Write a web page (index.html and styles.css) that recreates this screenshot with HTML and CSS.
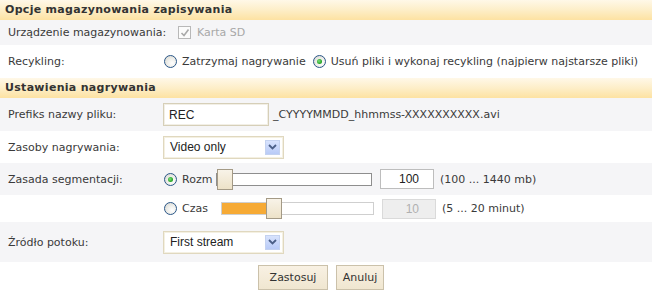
FILE: index.html
```html
<!DOCTYPE html>
<html lang="pl">
<head>
<meta charset="utf-8">
<title>Opcje nagrywania</title>
<link rel="stylesheet" href="styles.css">
</head>
<body>
<div class="page">
  <div class="head">Opcje magazynowania zapisywania</div>
  <div class="row gray h25">
    <div class="label">Urządzenie magazynowania:</div>
    <div class="ctl">
      <span class="check"><svg width="10" height="10" viewBox="0 0 10 10"><path d="M1.5 5 L4 7.5 L8.5 1.5" fill="none" stroke="#a9a9a9" stroke-width="1.6"/></svg></span>
      <span class="muted">Karta SD</span>
    </div>
  </div>
  <div class="row h33">
    <div class="label">Recykling:</div>
    <div class="ctl">
      <span class="radio"></span><span class="opt">Zatrzymaj nagrywanie</span>
      <span class="radio on"></span><span class="opt">Usuń pliki i wykonaj recykling (najpierw najstarsze pliki)</span>
    </div>
  </div>
  <div class="head">Ustawienia nagrywania</div>
  <div class="row gray h33">
    <div class="label">Prefiks nazwy pliku:</div>
    <div class="ctl">
      <span class="text prefix">REC</span>
      <span class="suffix">_CYYYYMMDD_hhmmss-XXXXXXXXXX.avi</span>
    </div>
  </div>
  <div class="row h32">
    <div class="label">Zasoby nagrywania:</div>
    <div class="ctl">
      <span class="select">Video only<span class="arrow"><svg width="9" height="6" viewBox="0 0 9 6"><path d="M1 1 L4.5 4.5 L8 1" fill="none" stroke="#4b5f87" stroke-width="1.8"/></svg></span></span>
    </div>
  </div>
  <div class="row gray h32">
    <div class="label">Zasada segmentacji:</div>
    <div class="ctl">
      <span class="seg-opt"><span class="radio on"></span><span class="opt small">Rozm</span></span>
      <span class="slider wide"><span class="thumb" style="left:0px"></span></span>
      <span class="num">100</span>
      <span class="range">(100 ... 1440 mb)</span>
    </div>
  </div>
  <div class="row h27">
    <div class="label"></div>
    <div class="ctl">
      <span class="seg-opt"><span class="radio"></span><span class="opt small">Czas</span></span>
      <span class="slider off"><span class="fill" style="width:45px"></span><span class="thumb" style="left:44px"></span></span>
      <span class="num dis">10</span>
      <span class="range">(5 ... 20 minut)</span>
    </div>
  </div>
  <div class="row gray h40">
    <div class="label">Źródło potoku:</div>
    <div class="ctl">
      <span class="select">First stream<span class="arrow"><svg width="9" height="6" viewBox="0 0 9 6"><path d="M1 1 L4.5 4.5 L8 1" fill="none" stroke="#4b5f87" stroke-width="1.8"/></svg></span></span>
    </div>
  </div>
  <div class="buttons">
    <span class="btn apply">Zastosuj</span>
    <span class="btn cancel">Anuluj</span>
  </div>
</div>
</body>
</html>
```
FILE: styles.css
```css
html, body {
  margin: 0;
  padding: 0;
  background: #ffffff;
}
.page {
  width: 652px;
  font-family: "DejaVu Sans", Verdana, sans-serif;
  font-size: 11px;
  color: #3a3a3a;
}
.head {
  height: 20px;
  line-height: 20px;
  padding-left: 5px;
  font-weight: bold;
  letter-spacing: 0.3px;
  color: #333333;
  background: linear-gradient(to bottom, #fff8e8 0%, #fdeec8 50%, #fde2a2 100%);
}
.row {
  display: flex;
  align-items: center;
}
.gray { background: #f5f5f7; }
.h25 { height: 25px; }
.h27 { height: 27px; }
.h32 { height: 32px; }
.h33 { height: 33px; }
.h40 { height: 40px; }
.label {
  width: 155px;
  padding-left: 8px;
  flex: none;
  white-space: nowrap;
}
.ctl {
  display: flex;
  align-items: center;
  flex: 1;
}
.check {
  width: 11px;
  height: 11px;
  border: 1px solid #b8b8b8;
  background: #fbfbfb;
  display: flex;
  align-items: center;
  justify-content: center;
  margin-left: 15px;
  margin-right: 6px;
}
.muted { color: #a8a8a8; }
.radio {
  width: 11px;
  height: 11px;
  border: 1px solid #2a5688;
  border-radius: 50%;
  background: radial-gradient(circle at 65% 65%, #ffffff 0%, #eeeeea 45%, #d4d4cc 100%);
  position: relative;
  flex: none;
  margin-left: 1px;
}
.radio.on::after {
  content: "";
  position: absolute;
  left: 3px;
  top: 3px;
  width: 5px;
  height: 5px;
  border-radius: 50%;
  background: radial-gradient(circle at 40% 40%, #7ee07e 0%, #2aa82a 60%, #1a8a1a 100%);
}
.opt { margin-left: 5px; margin-right: 6px; }
.opt.small { margin-right: 0; }
.text {
  font-family: "Liberation Sans", Arial, sans-serif;
  font-size: 12px;
  color: #222;
  background: #fff;
  border: 1px solid #d6cfb8;
  box-shadow: inset 0 0 0 1px #f2efe6;
  box-sizing: border-box;
  display: flex;
  align-items: center;
}
.prefix {
  width: 106px;
  height: 23px;
  padding-left: 5px;
}
.suffix { margin-left: 4px; }
.select {
  font-family: "Liberation Sans", Arial, sans-serif;
  font-size: 12px;
  color: #222;
  width: 121px;
  height: 23px;
  box-sizing: border-box;
  border: 1px solid #e0d8bf;
  box-shadow: inset 0 0 0 1px #f4f0e2;
  background: #fff;
  display: flex;
  align-items: center;
  padding-left: 6px;
  position: relative;
}
.arrow {
  position: absolute;
  right: 3px;
  top: 3px;
  width: 15px;
  height: 15px;
  background: linear-gradient(to bottom, #d8e3fd, #b9cbf7);
  border: 1px solid #c4d2f0;
  box-sizing: border-box;
  display: flex;
  align-items: center;
  justify-content: center;
}
.seg-opt {
  width: 58px;
  display: flex;
  align-items: center;
  flex: none;
}
.slider {
  width: 151px;
  height: 11px;
  border: 1px solid #8e8e8e;
  background: #fff;
  position: relative;
  flex: none;
}
.slider.wide {
  width: 154px;
  margin-left: -5px;
}
.slider.off { border-color: #cfcfcf; }
.fill {
  position: absolute;
  left: 0;
  top: 0;
  bottom: 0;
  background: #f6aa35;
}
.thumb {
  position: absolute;
  top: -5px;
  width: 14px;
  height: 19px;
  border: 1px solid #a49a86;
  background: linear-gradient(to bottom, #f8f3e8, #ede2c8);
}
.num {
  font-family: "Liberation Sans", Arial, sans-serif;
  font-size: 12px;
  color: #222;
  width: 54px;
  height: 20px;
  box-sizing: border-box;
  border: 1px solid #bdbdbd;
  background: #fff;
  margin-left: 8px;
  display: flex;
  align-items: center;
  justify-content: flex-end;
  padding-right: 14px;
}
.num.dis {
  background: #eeeeee;
  color: #b0b0b0;
  border-color: #dadada;
  padding-right: 16px;
}
.range { margin-left: 6px; }
.buttons {
  display: flex;
  justify-content: center;
  gap: 8px;
  padding-top: 3px;
  padding-right: 10px;
  height: 31px;
  box-sizing: border-box;
}
.btn {
  height: 25px;
  box-sizing: border-box;
  border: 1px solid #cbc1aa;
  background: linear-gradient(to bottom, #f8f1e3, #f0e6d0);
  display: flex;
  align-items: center;
  justify-content: center;
  color: #333;
}
.apply { width: 70px; }
.cancel { width: 48px; }
```
